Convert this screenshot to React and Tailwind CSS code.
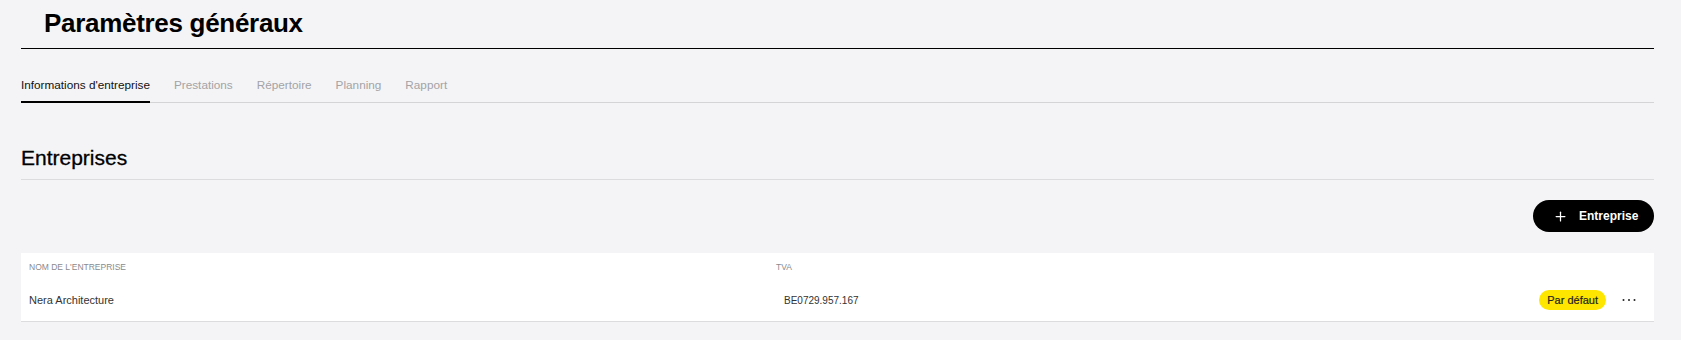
import { Plus } from 'lucide-react';

const tabs = ["Informations d'entreprise", 'Prestations', 'Répertoire', 'Planning', 'Rapport'];

const App = () => {
  return (
    <div className="min-h-screen bg-[#f4f4f6] pl-[21px] pr-[27px] font-['Liberation_Sans',Arial,sans-serif] text-black">
      {/* Page title */}
      <div className="h-[49px] border-b border-black pl-[23px] flex items-center pb-[2px]">
        <h1 className="text-[26px] font-bold tracking-[-0.3px] leading-none">Paramètres généraux</h1>
      </div>

      {/* Tabs */}
      <div className="flex gap-[24px] pt-[28px] border-b border-[#d4d4d6]">
        {tabs.map((t, i) => (
          <button
            key={t}
            className={`-mb-px pb-2 text-[11.75px] leading-4 border-b-2 ${
              i === 0 ? 'border-black text-[#111]' : 'border-transparent text-[#a3a3a6]'
            }`}
          >
            {t}
          </button>
        ))}
      </div>

      {/* Section */}
      <div className="mt-[41px] pb-[7px] border-b border-[#dcdcdf]">
        <h2 className="text-[21px] leading-[28px] text-black [-webkit-text-stroke:0.3px_black]">Entreprises</h2>
      </div>

      <div className="flex justify-end mt-[20px]">
        <button className="h-[32px] w-[121px] rounded-full bg-black text-white flex items-center pl-[20px] gap-[11px]">
          <Plus className="w-[15px] h-[15px]" strokeWidth={2} />
          <span className="text-[12px] font-bold">Entreprise</span>
        </button>
      </div>

      {/* Table */}
      <div className="mt-[21px] bg-white border-b border-[#dcdcdf]">
        <div className="h-[28px] flex items-center pl-2 text-[8.5px] uppercase text-[#8a8a8e]">
          <div className="w-[747px]">NOM DE L'ENTREPRISE</div>
          <div>TVA</div>
        </div>
        <div className="h-[40px] flex items-center pl-2 pr-[18px] pb-[2px]">
          <div className="w-[747px] text-[11px] text-[#333]">Nera Architecture</div>
          <div className="pl-2 text-[10px] text-[#333]">BE0729.957.167</div>
          <div className="ml-auto flex items-center">
            <span className="h-[20px] px-2 rounded-full bg-[#ffe600] text-[11px] text-[#222] flex items-center [-webkit-text-stroke:0.2px_#222]">Par défaut</span>
            <svg className="ml-4" width="14" height="4" viewBox="0 0 14 4">
              <circle cx="1.5" cy="2" r="1" fill="#222" />
              <circle cx="7" cy="2" r="1" fill="#222" />
              <circle cx="12.5" cy="2" r="1" fill="#222" />
            </svg>
          </div>
        </div>
      </div>
    </div>
  );
};

export default App;
